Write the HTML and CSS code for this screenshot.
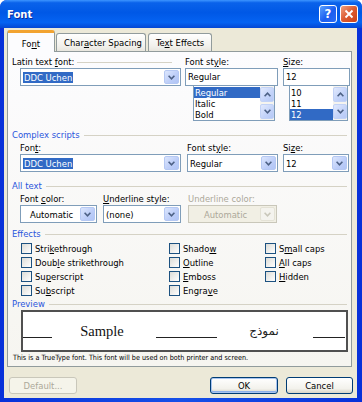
FILE: index.html
```html
<!DOCTYPE html>
<html lang="en">
<head>
    <meta charset="UTF-8">
    <title>Font</title>
    <link rel="stylesheet" href="styles.css">
</head>
<body>
<div class="window">
    <div class="titlebar">
        <span class="title">Font</span>
        <div class="caption-buttons">
            <span class="cap-btn help">?</span>
            <span class="cap-btn close">
                <svg width="10" height="10" viewBox="0 0 10 10"><path d="M1.5 1.5 L8.5 8.5 M8.5 1.5 L1.5 8.5" stroke="#fff" stroke-width="1.9" fill="none"/></svg>
            </span>
        </div>
    </div>

    <div class="dialog">
        <div class="tabs">
            <div class="tab active">Fo<u>n</u>t</div>
            <div class="tab">Char<u>a</u>cter Spacing</div>
            <div class="tab">Te<u>x</u>t Effects</div>
        </div>

        <div class="panel">
            <!-- latin text -->
            <div class="latin">
                <div class="col-font">
                    <div class="label line-label"><span>Latin text <u>f</u>ont:</span></div>
                    <div class="combo latin-combo">
                        <span class="value"><span class="sel">DDC Uchen</span></span>
                        <span class="drop"><svg width="7" height="5" viewBox="0 0 7 5"><path d="M0.6 0.8 L3.5 3.8 L6.4 0.8" fill="none" stroke="#4d6185" stroke-width="1.6"/></svg></span>
                    </div>
                </div>
                <div class="col-style">
                    <div class="label">Font st<u>y</u>le:</div>
                    <div class="textbox">Regular</div>
                    <div class="listbox style-list">
                        <div class="items">
                            <div class="item selected">Regular</div>
                            <div class="item">Italic</div>
                            <div class="item">Bold</div>
                        </div>
                        <div class="scrollbar">
                            <span class="sb-btn"><svg width="7" height="5" viewBox="0 0 7 5"><path d="M0.6 4.2 L3.5 1.2 L6.4 4.2" fill="none" stroke="#4d6185" stroke-width="1.6"/></svg></span>
                            <span class="sb-btn"><svg width="7" height="5" viewBox="0 0 7 5"><path d="M0.6 0.8 L3.5 3.8 L6.4 0.8" fill="none" stroke="#4d6185" stroke-width="1.6"/></svg></span>
                        </div>
                    </div>
                </div>
                <div class="col-size">
                    <div class="label"><u>S</u>ize:</div>
                    <div class="textbox">12</div>
                    <div class="listbox size-list">
                        <div class="items">
                            <div class="item">10</div>
                            <div class="item">11</div>
                            <div class="item selected">12</div>
                        </div>
                        <div class="scrollbar">
                            <span class="sb-btn"><svg width="7" height="5" viewBox="0 0 7 5"><path d="M0.6 4.2 L3.5 1.2 L6.4 4.2" fill="none" stroke="#4d6185" stroke-width="1.6"/></svg></span>
                            <span class="sb-btn"><svg width="7" height="5" viewBox="0 0 7 5"><path d="M0.6 0.8 L3.5 3.8 L6.4 0.8" fill="none" stroke="#4d6185" stroke-width="1.6"/></svg></span>
                        </div>
                    </div>
                </div>
            </div>

            <!-- complex scripts -->
            <div class="group">Complex scripts</div>
            <div class="row complex">
                <div class="c1">
                    <div class="label">Fon<u>t</u>:</div>
                    <div class="combo">
                        <span class="value"><span class="sel">DDC Uchen</span></span>
                        <span class="drop"><svg width="7" height="5" viewBox="0 0 7 5"><path d="M0.6 0.8 L3.5 3.8 L6.4 0.8" fill="none" stroke="#4d6185" stroke-width="1.6"/></svg></span>
                    </div>
                </div>
                <div class="c2">
                    <div class="label">Font st<u>y</u>le:</div>
                    <div class="combo">
                        <span class="value">Regular</span>
                        <span class="drop"><svg width="7" height="5" viewBox="0 0 7 5"><path d="M0.6 0.8 L3.5 3.8 L6.4 0.8" fill="none" stroke="#4d6185" stroke-width="1.6"/></svg></span>
                    </div>
                </div>
                <div class="c3">
                    <div class="label">Si<u>z</u>e:</div>
                    <div class="combo">
                        <span class="value">12</span>
                        <span class="drop"><svg width="7" height="5" viewBox="0 0 7 5"><path d="M0.6 0.8 L3.5 3.8 L6.4 0.8" fill="none" stroke="#4d6185" stroke-width="1.6"/></svg></span>
                    </div>
                </div>
            </div>

            <!-- all text -->
            <div class="group">All text</div>
            <div class="row alltext">
                <div class="c1">
                    <div class="label">Font <u>c</u>olor:</div>
                    <div class="combo">
                        <span class="value center">Automatic</span>
                        <span class="drop"><svg width="7" height="5" viewBox="0 0 7 5"><path d="M0.6 0.8 L3.5 3.8 L6.4 0.8" fill="none" stroke="#4d6185" stroke-width="1.6"/></svg></span>
                    </div>
                </div>
                <div class="c2">
                    <div class="label"><u>U</u>nderline style:</div>
                    <div class="combo">
                        <span class="value">(none)</span>
                        <span class="drop"><svg width="7" height="5" viewBox="0 0 7 5"><path d="M0.6 0.8 L3.5 3.8 L6.4 0.8" fill="none" stroke="#4d6185" stroke-width="1.6"/></svg></span>
                    </div>
                </div>
                <div class="c3">
                    <div class="label disabled">Underline color:</div>
                    <div class="combo disabled">
                        <span class="value center">Automatic</span>
                        <span class="drop"><svg width="7" height="5" viewBox="0 0 7 5"><path d="M0.6 0.8 L3.5 3.8 L6.4 0.8" fill="none" stroke="#c9c7ba" stroke-width="1.6"/></svg></span>
                    </div>
                </div>
            </div>

            <!-- effects -->
            <div class="group">Effects</div>
            <div class="effects">
                <label class="check"><span class="box"></span><span>Stri<u>k</u>ethrough</span></label>
                <label class="check"><span class="box"></span><span>Doub<u>l</u>e strikethrough</span></label>
                <label class="check"><span class="box"></span><span>Su<u>p</u>erscript</span></label>
                <label class="check"><span class="box"></span><span>Su<u>b</u>script</span></label>
                <label class="check"><span class="box"></span><span>Shado<u>w</u></span></label>
                <label class="check"><span class="box"></span><span><u>O</u>utline</span></label>
                <label class="check"><span class="box"></span><span><u>E</u>mboss</span></label>
                <label class="check"><span class="box"></span><span>Engra<u>v</u>e</span></label>
                <label class="check"><span class="box"></span><span>S<u>m</u>all caps</span></label>
                <label class="check"><span class="box"></span><span><u>A</u>ll caps</span></label>
                <label class="check"><span class="box"></span><span><u>H</u>idden</span></label>
            </div>

            <!-- preview -->
            <div class="group">Preview</div>
            <div class="preview">
                <span class="pline l1"></span>
                <span class="sample">Sample</span>
                <span class="pline l2"></span>
                <span class="arabic" dir="rtl">نموذج</span>
                <span class="pline l3"></span>
            </div>
            <div class="note">This is a TrueType font. This font will be used on both printer and screen.</div>
        </div>

        <div class="buttons">
            <span class="btn disabled">Default...</span>
            <span class="btn default">OK</span>
            <span class="btn">Cancel</span>
        </div>
    </div>
</div>
</body>
</html>
```

FILE: styles.css
```css
* {
    margin: 0;
    padding: 0;
    box-sizing: border-box;
}

body {
    width: 362px;
    height: 402px;
    overflow: hidden;
    background: #fff;
    font-family: "DejaVu Sans Condensed", "DejaVu Sans", sans-serif;
    font-stretch: semi-condensed;
    font-size: 9.4px;
    color: #000;
}

u {
    text-decoration: underline;
    text-underline-offset: 1px;
}

.window {
    width: 362px;
    height: 402px;
    display: flex;
    flex-direction: column;
    background: linear-gradient(to right, #0831d9, #1650e8 50%, #0831d9);
    border-radius: 7px 7px 0 0;
    overflow: hidden;
}

/* title bar */
.titlebar {
    height: 28px;
    flex: none;
    display: flex;
    align-items: center;
    justify-content: space-between;
    padding: 0 4px 0 7px;
    background: linear-gradient(to bottom, #3d95ff 0%, #0a62ea 10%, #0058e6 45%, #0563f2 80%, #0447d3 100%);
}

.title {
    color: #fff;
    font-family: "DejaVu Sans", sans-serif;
    font-stretch: normal;
    font-weight: bold;
    font-size: 10px;
    text-shadow: 1px 1px 0 #0a2a9a;
}

.caption-buttons {
    display: flex;
    gap: 3px;
    margin-top: -1px;
}

.cap-btn {
    width: 18px;
    height: 18px;
    border: 1px solid #fff;
    border-radius: 3px;
    display: flex;
    align-items: center;
    justify-content: center;
}

.help {
    background: linear-gradient(135deg, #5aa2ff, #1b5ef0 55%, #2a6cf5);
    color: #fff;
    font-family: "DejaVu Sans", sans-serif;
    font-weight: bold;
    font-size: 13px;
}

.close {
    background: linear-gradient(135deg, #f0a080, #dc5a30 50%, #c9421a);
}

/* dialog body */
.dialog {
    flex: 1;
    margin: 0 5px 4px 4px;
    background: #ece9d8;
    padding: 2px 4px 0 3px;
    display: flex;
    flex-direction: column;
}

.tabs {
    display: flex;
    align-items: flex-end;
    height: 21px;
}

.tab {
    height: 18px;
    padding: 3px 7px 0;
    border: 1px solid #919b9c;
    border-bottom: none;
    border-radius: 3px 3px 0 0;
    background: linear-gradient(#fffffe, #f2f1ec 70%, #e8e6de);
    white-space: nowrap;
}

.tab + .tab {
    margin-left: 2px;
}

.tab.active {
    width: 48px;
    height: 22px;
    margin-bottom: -1px;
    padding: 5px 0 0;
    text-align: center;
    background: #fcfcfe;
    border-top: 3px solid #f2a330;
    position: relative;
    z-index: 1;
}

.tab.active + .tab {
    margin-left: 1px;
    width: 90px;
}

.panel {
    width: 345px;
    height: 316px;
    border: 1px solid #919b9c;
    background: linear-gradient(#fcfcfe, #f6f5f0);
    padding: 4px 0 0 4px;
}

.label {
    height: 12px;
    line-height: 12px;
    white-space: nowrap;
}

.label.disabled {
    color: #aca899;
}

.line-label {
    display: flex;
    align-items: center;
}

.line-label::after {
    content: "";
    flex: 1;
    border-top: 1px solid #d5d2c5;
    margin: 1px 9px 0 3px;
}

/* latin section */
.latin {
    display: flex;
}

.col-font {
    width: 169px;
}

.latin-combo {
    margin-left: 8px;
}

.col-style {
    width: 93px;
    margin-left: 4px;
}

.col-size {
    width: 67px;
    margin-left: 5px;
}

.combo {
    height: 18px;
    border: 1px solid #7f9db9;
    background: #fff;
    display: flex;
    align-items: center;
    padding: 1px;
}

.combo .value {
    flex: 1;
    padding-left: 1px;
    white-space: nowrap;
}

.combo .value.center {
    text-align: center;
}

.sel {
    background: #316ac5;
    color: #fff;
    padding: 0 1px;
}

.drop {
    width: 15px;
    height: 14px;
    flex: none;
    display: flex;
    align-items: center;
    justify-content: center;
    border: 1px solid #b5c8f3;
    border-radius: 2px;
    background: linear-gradient(135deg, #dce6fd, #bccdf8 60%, #b1c5f6);
}

.combo.disabled {
    background: #f1efe4;
    border-color: #c9c7ba;
    color: #aca899;
}

.combo.disabled .drop {
    background: #f4f3ee;
    border-color: #e4e2d6;
}

.textbox {
    height: 18px;
    border: 1px solid #7f9db9;
    background: #fff;
    line-height: 16px;
    padding-left: 2px;
}

.listbox {
    height: 35px;
    border: 1px solid #7f9db9;
    border-top: none;
    background: #fff;
    display: flex;
}

.style-list {
    margin-left: 8px;
    width: 82px;
}

.size-list {
    margin-left: 6px;
    width: 59px;
}

.items {
    flex: 1;
    padding-top: 1px;
}

.item {
    height: 11px;
    line-height: 11px;
    padding-left: 1px;
}

.item.selected {
    background: #316ac5;
    color: #fff;
}

.scrollbar {
    width: 14px;
    display: flex;
    flex-direction: column;
    justify-content: space-between;
    background: #f5f4ef;
    padding: 1px 0;
}

.sb-btn {
    height: 15px;
    display: flex;
    align-items: center;
    justify-content: center;
    border: 1px solid #c2d2f6;
    border-radius: 2px;
    background: linear-gradient(135deg, #e1e9fd, #c3d3f9 60%, #b5c8f6);
}

/* groups */
.group {
    display: flex;
    align-items: center;
    height: 10px;
    line-height: 10px;
    color: #2a55dc;
    white-space: nowrap;
}

.group::after {
    content: "";
    flex: 1;
    border-top: 1px solid #d5d2c5;
    margin: 1px 4px 0 4px;
}

.row {
    display: flex;
    padding-left: 8px;
    margin-top: 2px;
}

.complex .c1 {
    width: 161px;
}

.complex .c2 {
    width: 91px;
    margin-left: 6px;
}

.complex .c3 {
    width: 66px;
    margin-left: 5px;
}

.alltext .c1 {
    width: 77px;
}

.alltext .c2 {
    width: 78px;
    margin-left: 6px;
}

.alltext .c3 {
    width: 89px;
    margin-left: 7px;
}

.latin + .group {
    margin-top: 9px;
}

.complex + .group {
    margin-top: 9px;
}

.alltext + .group {
    margin-top: 6px;
}

/* effects */
.effects {
    display: grid;
    grid-template-columns: 148px 96px 1fr;
    grid-template-rows: repeat(4, 14px);
    grid-auto-flow: column;
    padding-left: 9px;
    margin-top: 2px;
}

.check {
    display: flex;
    align-items: center;
    gap: 3px;
    white-space: nowrap;
}

.box {
    width: 11px;
    height: 11px;
    border: 1px solid #1c5180;
    background: linear-gradient(135deg, #dcdcd7, #fff);
}

.effects + .group {
    margin-top: 2px;
}

/* preview */
.preview {
    margin: 1px 0 0 9px;
    width: 327px;
    height: 42px;
    border: 2px solid #505050;
    background: #fff;
    display: flex;
    align-items: center;
}

.pline {
    align-self: flex-end;
    margin-bottom: 12px;
    height: 1px;
    background: #222;
}

.l1 {
    width: 29px;
}

.sample {
    width: 50px;
    margin-left: 25px;
    text-align: center;
    font-family: "Liberation Serif", serif;
    font-size: 14.5px;
    color: #111;
}

.l2 {
    width: 61px;
    margin-left: 29px;
}

.arabic {
    width: 40px;
    margin-left: 27px;
    text-align: center;
    font-family: "DejaVu Sans", sans-serif;
    font-stretch: normal;
    font-size: 12px;
    color: #222;
}

.l3 {
    width: 32px;
    margin-left: 29px;
}

.note {
    margin: 1px 0 0 1px;
    height: 10px;
    line-height: 10px;
    font-size: 7.2px;
    white-space: nowrap;
}

/* bottom buttons */
.buttons {
    display: flex;
    gap: 8px;
    margin-top: 10px;
    padding-left: 2px;
}

.btn {
    width: 68px;
    height: 17px;
    display: flex;
    align-items: center;
    justify-content: center;
    border: 1px solid #003c74;
    border-radius: 3px;
    background: linear-gradient(#ffffff, #f3f2ec 70%, #d8d4c8);
}

.btn.default {
    margin-left: auto;
    box-shadow: inset 0 0 0 1px #a8c4f0, inset 0 -1px 0 1px #8cb0ea;
}

.btn:last-child {
    width: 67px;
}

.btn.disabled {
    border-color: #c9c7ba;
    background: #f5f4ea;
    color: #aca899;
}
```
